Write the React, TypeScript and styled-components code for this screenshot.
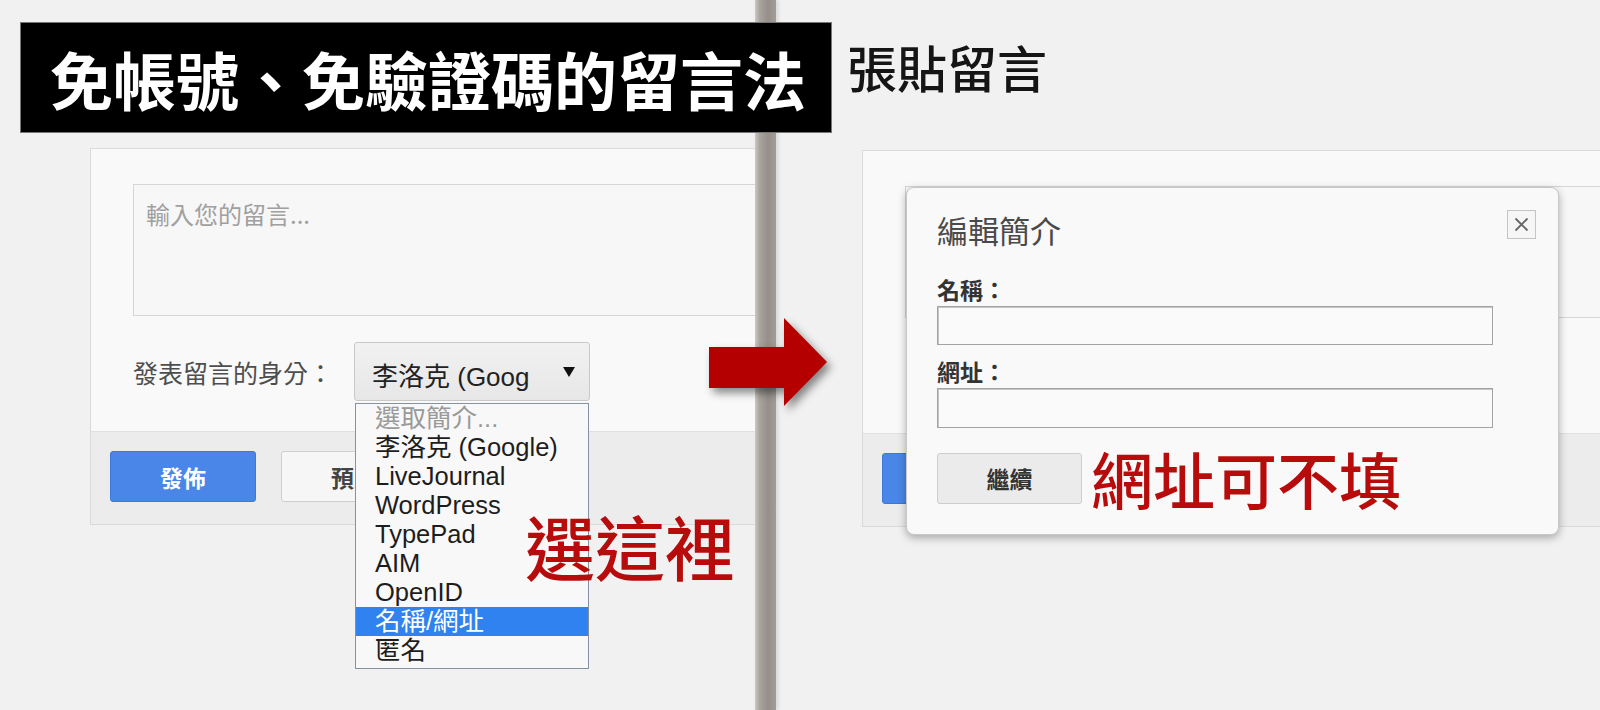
import React from "react";
import styled, { createGlobalStyle } from "styled-components";

const CJK = `"Noto Sans CJK TC", "Noto Sans", sans-serif`;
const UI = `"Liberation Sans", "Noto Sans CJK TC", sans-serif`;

const GlobalStyle = createGlobalStyle`
  html, body {
    margin: 0;
    padding: 0;
    background: #f1f1f1;
  }
  body {
    font-family: ${CJK};
  }
`;

const Page = styled.div`
  position: relative;
  width: 1600px;
  height: 710px;
  display: flex;
  overflow: hidden;
  background: #f1f1f1;
`;

const LeftPanel = styled.section`
  position: relative;
  flex: none;
  width: 755px;
  padding: 148px 0 0 90px;
  box-sizing: border-box;
  overflow: hidden;
`;

const Divider = styled.div`
  flex: none;
  width: 21px;
  background: linear-gradient(90deg, #cdc8c4 0%, #aaa49f 22%, #958e89 62%, #a39d98 100%);
  box-shadow: 2px 0 4px rgba(0, 0, 0, 0.12);
`;

const RightPanel = styled.section`
  position: relative;
  flex: 1;
  padding: 36px 0 0 71px;
  overflow: hidden;
`;

const PageTitle = styled.h1`
  margin: 0;
  font-family: ${CJK};
  font-size: 50px;
  font-weight: 500;
  line-height: 60px;
  color: #151515;
`;

const Banner = styled.div`
  position: absolute;
  left: 20px;
  top: 22px;
  z-index: 5;
  width: 812px;
  height: 111px;
  box-sizing: border-box;
  padding-left: 29px;
  display: flex;
  align-items: center;
  background: #000;
  border: 1px solid #777;
  color: #fff;
  font-family: ${CJK};
  font-size: 63px;
  font-weight: 700;
  line-height: 1;
  white-space: nowrap;
`;

const Note = styled.div<{ $size: number }>`
  font-family: ${CJK};
  font-size: ${p => p.$size}px;
  font-weight: 500;
  line-height: 1;
  color: #b80c0c;
  white-space: nowrap;
`;

const FloatingNote = styled(Note)`
  position: absolute;
  left: 525px;
  top: 511px;
  z-index: 4;
`;

const Arrow = styled.svg`
  position: absolute;
  left: 705px;
  top: 314px;
  z-index: 6;
  filter: drop-shadow(4px 5px 4px rgba(0, 0, 0, 0.45));
`;

/* comment box */

const Card = styled.div<{ $offset?: number }>`
  width: 760px;
  margin: ${p => (p.$offset ? "54px 0 0 15px" : "0")};
  background: #f9f9f9;
  border: 1px solid #dadada;
`;

const CardBody = styled.div`
  padding: 35px 0 30px 42px;
`;

const TextArea = styled.div`
  height: 132px;
  box-sizing: border-box;
  padding: 13px 12px;
  border: 1px solid #d6d6d6;
  background: #f7f7f7;
  font-family: ${CJK};
  font-size: 24px;
  line-height: 32px;
  color: #a0a0a0;
`;

const IdentityRow = styled.div`
  margin-top: 26px;
  height: 59px;
  display: flex;
  align-items: center;
  gap: 21px;
`;

const IdentityLabel = styled.span`
  font-family: ${CJK};
  font-size: 25px;
  color: #4e4e4e;
`;

const SelectWrap = styled.div`
  position: relative;
`;

const SelectBox = styled.div`
  width: 236px;
  height: 59px;
  box-sizing: border-box;
  padding: 0 14px 0 17px;
  display: flex;
  align-items: center;
  justify-content: space-between;
  border: 1px solid #c9c9c9;
  border-radius: 3px;
  background: linear-gradient(#f1f1f1, #e7e7e7);
  font-family: ${UI};
  font-size: 26px;
  color: #222;
`;

const SelectValue = styled.span`
  white-space: nowrap;
  padding-top: 6px;
`;

const DropList = styled.ul`
  position: absolute;
  left: 1px;
  top: calc(100% + 2px);
  z-index: 3;
  width: 234px;
  box-sizing: border-box;
  margin: 0;
  padding: 0 0 3px;
  list-style: none;
  background: #f8f8f8;
  border: 1px solid #8393a3;
  font-family: ${UI};
  font-size: 25.5px;
  line-height: 29px;
`;

const DropItem = styled.li<{ $muted?: boolean; $active?: boolean }>`
  padding-left: 19px;
  white-space: nowrap;
  color: ${p => (p.$active ? "#fff" : p.$muted ? "#9a9a9a" : "#1d1d1d")};
  background: ${p => (p.$active ? "#2f82f0" : "transparent")};
`;

const CardFooter = styled.div`
  height: 93px;
  box-sizing: border-box;
  padding: 19px 0 0 19px;
  display: flex;
  gap: 25px;
  background: #ececec;
  border-top: 1px solid #e0e0e0;
`;

const Button = styled.button<{ $primary?: boolean }>`
  width: 146px;
  height: 51px;
  border-radius: 3px;
  border: 1px solid ${p => (p.$primary ? "#3d78de" : "#cfcfcf")};
  background: ${p => (p.$primary ? "#4a86e8" : "#f6f6f6")};
  color: ${p => (p.$primary ? "#fff" : "#444")};
  font-family: ${CJK};
  font-size: 23px;
  font-weight: 700;
  cursor: pointer;
`;

/* profile dialog */

const Dialog = styled.div`
  position: absolute;
  left: 130px;
  top: 187px;
  z-index: 2;
  width: 653px;
  height: 348px;
  box-sizing: border-box;
  padding: 22px 22px 0 30px;
  background: #f9f9f9;
  border: 1px solid #c8c8c8;
  border-radius: 8px;
  box-shadow: 0 3px 8px rgba(0, 0, 0, 0.3);
`;

const DialogHead = styled.div`
  display: flex;
  justify-content: space-between;
  align-items: flex-start;
`;

const DialogTitle = styled.h2`
  margin: 0;
  font-family: ${CJK};
  font-size: 31px;
  font-weight: 400;
  line-height: 40px;
  color: #4a4a4a;
`;

const CloseBox = styled.div`
  width: 29px;
  height: 29px;
  box-sizing: border-box;
  display: grid;
  place-items: center;
  border: 1px solid #c4c4c4;
  background: #f6f6f6;
`;

const FieldLabel = styled.div<{ $gap: number }>`
  margin-top: ${p => p.$gap}px;
  font-family: ${CJK};
  font-size: 23px;
  font-weight: 700;
  line-height: 30px;
  color: #333;
`;

const Field = styled.div<{ $h: number }>`
  margin-top: 2px;
  width: 556px;
  height: ${p => p.$h}px;
  box-sizing: border-box;
  background: #fafafa;
  border: 1px solid #a3a3a3;
  box-shadow: inset 1px 1px 0 #c6c6c6;
`;

const ActionRow = styled.div`
  margin-top: 19px;
  display: flex;
  align-items: center;
  gap: 9px;
`;

const ContinueButton = styled.button`
  width: 145px;
  height: 51px;
  border: 1px solid #cdcdcd;
  border-radius: 3px;
  background: #ebebeb;
  color: #333;
  font-family: ${CJK};
  font-size: 23px;
  font-weight: 700;
`;

const options = ["選取簡介...", "李洛克 (Google)", "LiveJournal", "WordPress", "TypePad", "AIM", "OpenID", "名稱/網址", "匿名"];

// covered: the card sits under the dialog, so only its frame shows
const CommentCard = ({ open, offset, covered }: { open?: boolean; offset?: number; covered?: boolean }) => (
  <Card $offset={offset}>
    <CardBody>
      <TextArea>{covered ? null : "輸入您的留言..."}</TextArea>
      <IdentityRow>
        {!covered && (
          <>
            <IdentityLabel>發表留言的身分：</IdentityLabel>
            <SelectWrap>
              <SelectBox>
                <SelectValue>李洛克 (Goog</SelectValue>
                <svg width="12" height="12" viewBox="0 0 12 12">
                  <path d="M0 1 L12 1 L6 11 Z" fill="#111" />
                </svg>
              </SelectBox>
              {open && (
                <DropList>
                  {options.map((o, i) => (
                    <DropItem key={o} $muted={i === 0} $active={o === "名稱/網址"}>
                      {o}
                    </DropItem>
                  ))}
                </DropList>
              )}
            </SelectWrap>
          </>
        )}
      </IdentityRow>
    </CardBody>
    <CardFooter>
      <Button $primary>{covered ? null : "發佈"}</Button>
      <Button>{covered ? null : "預覽"}</Button>
    </CardFooter>
  </Card>
);

export default function App() {
  return (
    <>
      <GlobalStyle />
      <Page>
        <Banner>免帳號、免驗證碼的留言法</Banner>

        <LeftPanel>
          <CommentCard open />
        </LeftPanel>

        <Divider />

        <RightPanel>
          <PageTitle>張貼留言</PageTitle>
          <CommentCard offset={15} covered />
          <Dialog>
            <DialogHead>
              <DialogTitle>編輯簡介</DialogTitle>
              <CloseBox>
                <svg width="15" height="15" viewBox="0 0 15 15">
                  <path d="M1.5 1.5 L13.5 13.5 M13.5 1.5 L1.5 13.5" stroke="#666" strokeWidth="1.8" />
                </svg>
              </CloseBox>
            </DialogHead>
            <FieldLabel $gap={24}>名稱：</FieldLabel>
            <Field $h={39} />
            <FieldLabel $gap={11}>網址：</FieldLabel>
            <Field $h={40} />
            <ActionRow>
              <ContinueButton>繼續</ContinueButton>
              <Note $size={62}>網址可不填</Note>
            </ActionRow>
          </Dialog>
        </RightPanel>

        <FloatingNote $size={70}>選這裡</FloatingNote>

        <Arrow width="130" height="100" viewBox="0 0 130 100">
          <path d="M4 33 L79 33 L79 4 L122 48 L79 92 L79 74 L4 74 Z" fill="#b50000" />
        </Arrow>
      </Page>
    </>
  );
}
